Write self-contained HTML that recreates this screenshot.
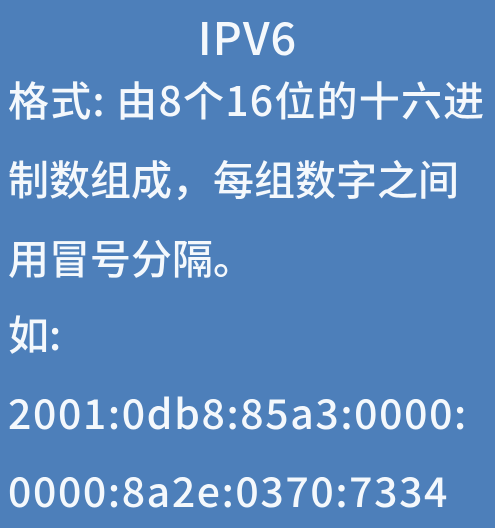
<!DOCTYPE html>
<html><head><meta charset="utf-8"><style>
html,body{margin:0;padding:0;width:495px;height:528px;background:#4d7fba;overflow:hidden}
div{position:absolute;left:8px;color:#f4f8fc;font-family:"Noto Sans CJK SC",sans-serif;font-size:41px;font-weight:500;line-height:1;white-space:nowrap}
</style></head><body>
<div style="left:0;width:495px;text-align:center;top:13px;font-size:45px;letter-spacing:1px">IPV6</div>
<div style="top:78px;letter-spacing:1.2px">格式: 由8个16位的十六进</div>
<div style="top:157px">制数组成，每组数字之间</div>
<div style="top:236px">用冒号分隔。</div>
<div style="top:312px">如:</div>
<div style="top:391px;letter-spacing:1.6px">2001:0db8:85a3:0000:</div>
<div style="top:469px;letter-spacing:1.6px">0000:8a2e:0370:7334</div>
</body></html>
